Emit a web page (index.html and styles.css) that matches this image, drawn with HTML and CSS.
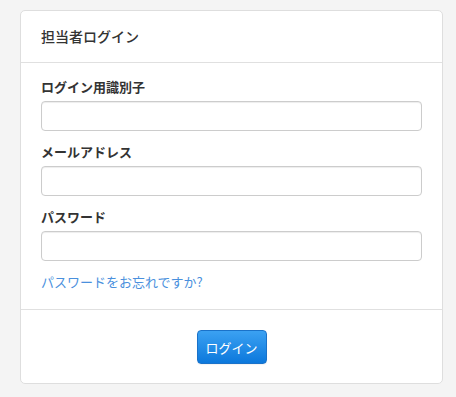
FILE: index.html
```html
<!DOCTYPE html>
<html lang="ja">
<head>
<meta charset="utf-8">
<title>担当者ログイン</title>
<link rel="stylesheet" href="styles.css">
</head>
<body>
<div class="card">
  <div class="card-header">担当者ログイン</div>
  <form class="card-body">
    <div class="form-group">
      <label class="label" for="uid">ログイン用識別子</label>
      <input class="input" id="uid" type="text">
    </div>
    <div class="form-group">
      <label class="label" for="mail">メールアドレス</label>
      <input class="input" id="mail" type="text">
    </div>
    <div class="form-group">
      <label class="label" for="pw">パスワード</label>
      <input class="input" id="pw" type="password">
    </div>
    <a class="forgot" href="#">パスワードをお忘れですか?</a>
  </form>
  <div class="card-footer">
    <button class="btn" type="button">ログイン</button>
  </div>
</div>
</body>
</html>
```
FILE: styles.css
```css
* { box-sizing: border-box; }
html, body { margin: 0; }
body {
  background: #f4f4f4;
  padding: 10px 13px 0 20px;
  font-family: "Noto Sans CJK JP", "Noto Sans", "Liberation Sans", sans-serif;
  color: #333;
}
.card {
  width: 423px;
  background: #fff;
  border: 1px solid #dedede;
  border-radius: 5px;
}
.card-header {
  height: 52px;
  padding: 0 20px 2px;
  display: flex;
  align-items: center;
  font-size: 14px;
  font-weight: 500;
  border-bottom: 1px solid #e0e0e0;
}
.card-body {
  display: flex;
  flex-direction: column;
  padding: 14px 20px 17px;
  margin: 0;
}
.form-group {
  display: flex;
  flex-direction: column;
  margin-bottom: 11px;
}
.label {
  font-size: 13px;
  font-weight: bold;
  line-height: 20px;
  margin-bottom: 4px;
}
.input {
  height: 30px;
  width: 100%;
  border: 1px solid #ccc;
  border-radius: 4px;
  box-shadow: inset 0 1px 1px rgba(0,0,0,0.075);
  background: #fff;
  font-size: 13px;
  padding: 4px 10px;
}
.forgot {
  font-size: 13px;
  line-height: 20px;
  color: #4a90dd;
  text-decoration: none;
}
.card-footer {
  border-top: 1px solid #e0e0e0;
  display: flex;
  justify-content: center;
  padding: 20px 0 19px;
}
.btn {
  width: 70px;
  height: 34px;
  border: 1px solid #1a72c9;
  border-radius: 4px;
  background: linear-gradient(to bottom, #3ba1f2 0%, #0c78dc 100%);
  color: #fff;
  font-family: inherit;
  font-size: 13px;
  padding: 0;
  cursor: pointer;
  box-shadow: 0 1px 1px rgba(0,0,0,0.05);
}
```
